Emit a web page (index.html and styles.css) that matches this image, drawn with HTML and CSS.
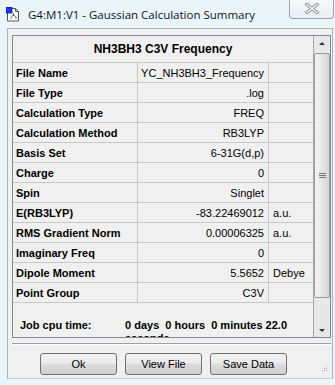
FILE: index.html
```html
<!doctype html>
<html lang="en">
  <head>
    <meta charset="UTF-8" />
    <title>G4:M1:V1 - Gaussian Calculation Summary</title>
    <link rel="stylesheet" href="styles.css">
  </head>
  <body>
    <div class="window">
      <div class="titlebar">
        <svg class="app-icon" width="14" height="15" viewBox="0 0 14 15">
          <path d="M1.5 1.5h8l3 3v9.5h-11z" fill="#fff" stroke="#555" />
          <path d="M9.5 1.5v3h3" fill="none" stroke="#555" />
          <rect x="0" y="0" width="6" height="6" fill="#1a3cf0" stroke="#0a1a80" stroke-width="0.8" />
          <path d="M5 10l2.5-2 2.5 2M7.5 8v-2M5 10v2M10 10v2" stroke="#777" fill="none" />
          <circle cx="7.5" cy="8" r="1" fill="#666" />
        </svg>
        <span class="title">G4:M1:V1 - Gaussian Calculation Summary</span>
        <div class="close-btn">
          <svg width="14" height="11" viewBox="0 0 14 11">
            <path d="M2 1.5l10 8M12 1.5l-10 8" stroke="#8a8f96" stroke-width="3.4" stroke-linecap="square" />
            <path d="M2 1.5l10 8M12 1.5l-10 8" stroke="#f4f6f8" stroke-width="1.6" stroke-linecap="square" />
          </svg>
        </div>
      </div>

      <div class="client">
        <div class="panel">
          <div class="content">
            <div class="head">NH3BH3 C3V Frequency</div>
            <div class="row"><div class="cell label">File Name</div><div class="cell value">YC_NH3BH3_Frequency</div><div class="cell unit"></div></div>
            <div class="row"><div class="cell label">File Type</div><div class="cell value">.log</div><div class="cell unit"></div></div>
            <div class="row"><div class="cell label">Calculation Type</div><div class="cell value">FREQ</div><div class="cell unit"></div></div>
            <div class="row"><div class="cell label">Calculation Method</div><div class="cell value">RB3LYP</div><div class="cell unit"></div></div>
            <div class="row"><div class="cell label">Basis Set</div><div class="cell value">6-31G(d,p)</div><div class="cell unit"></div></div>
            <div class="row"><div class="cell label">Charge</div><div class="cell value">0</div><div class="cell unit"></div></div>
            <div class="row"><div class="cell label">Spin</div><div class="cell value">Singlet</div><div class="cell unit"></div></div>
            <div class="row"><div class="cell label">E(RB3LYP)</div><div class="cell value">-83.22469012</div><div class="cell unit">a.u.</div></div>
            <div class="row"><div class="cell label">RMS Gradient Norm</div><div class="cell value">0.00006325</div><div class="cell unit">a.u.</div></div>
            <div class="row"><div class="cell label">Imaginary Freq</div><div class="cell value">0</div><div class="cell unit"></div></div>
            <div class="row"><div class="cell label">Dipole Moment</div><div class="cell value">5.5652</div><div class="cell unit">Debye</div></div>
            <div class="row"><div class="cell label">Point Group</div><div class="cell value">C3V</div><div class="cell unit"></div></div>
            <div class="cpu">
              <span class="cpu-label">Job cpu time:</span>
              <span class="cpu-value">0 days&nbsp; 0 hours&nbsp; 0 minutes 22.0 seconds</span>
            </div>
          </div>
          <div class="scrollbar">
            <div class="arrow up"></div>
            <div class="thumb"><span class="grip"></span></div>
            <div class="track"></div>
            <div class="arrow down"></div>
          </div>
        </div>

        <div class="separator"></div>

        <div class="buttons">
          <button class="btn">Ok</button>
          <button class="btn">View File</button>
          <button class="btn">Save Data</button>
          <svg class="grip-corner" width="7" height="7" viewBox="0 0 7 7">
            <rect x="5" y="1" width="1" height="1" fill="#a0a0a0" />
            <rect x="3" y="3" width="1" height="1" fill="#a0a0a0" />
            <rect x="5" y="3" width="1" height="1" fill="#a0a0a0" />
            <rect x="1" y="5" width="1" height="1" fill="#a0a0a0" />
            <rect x="3" y="5" width="1" height="1" fill="#a0a0a0" />
            <rect x="5" y="5" width="1" height="1" fill="#a0a0a0" />
          </svg>
        </div>
      </div>
    </div>
  </body>
</html>
```

FILE: styles.css
```css
html,
body {
  margin: 0;
  padding: 0;
}
body {
  width: 335px;
  height: 385px;
  overflow: hidden;
  background: #eaf5f9;
  font-family: "Liberation Sans", Arial, sans-serif;
  font-size: 11px;
  color: #000;
}
.window {
  width: 335px;
  height: 385px;
}
/* title bar */
.titlebar {
  height: 28px;
  display: flex;
  align-items: center;
  position: relative;
}
.app-icon {
  margin-left: 6px;
  margin-top: 1px;
}
.title {
  margin-left: 8px;
  font-family: "Open Sans", "Noto Sans", sans-serif;
  font-size: 11.5px;
  color: #10141c;
  margin-top: 1px;
}
.close-btn {
  position: absolute;
  top: -1px;
  right: 1px;
  width: 43px;
  height: 19px;
  border: 1px solid #9aa5b1;
  border-top: none;
  border-radius: 0 0 4px 4px;
  background: linear-gradient(#f6f9fb, #e9eef2);
  display: flex;
  align-items: center;
  justify-content: center;
}
/* client area */
.client {
  margin: 0 2px 0 7px;
  height: 351px;
  border: 1px solid #a8b3bc;
  border-bottom-color: #c4ccd2;
  background: #f0f0f0;
  box-sizing: border-box;
  padding: 6px 0 0 4px;
}
.panel {
  width: 319px;
  height: 303px;
  box-sizing: border-box;
  border: 1px solid #828790;
  display: flex;
  overflow: hidden;
}
.content {
  width: 300px;
  flex: none;
}
.head {
  height: 27px;
  border-bottom: 1px solid #c8c8c8;
  box-sizing: border-box;
  display: flex;
  align-items: center;
  justify-content: center;
  font-weight: bold;
  font-size: 12px;
}
.row {
  display: grid;
  grid-template-columns: 125px 131px 44px;
  height: 20px;
  border-bottom: 1px solid #c8c8c8;
  box-sizing: border-box;
}
.cell {
  display: flex;
  align-items: center;
  white-space: nowrap;
  overflow: hidden;
}
.label {
  font-weight: bold;
  padding-left: 3px;
  border-right: 1px solid #c8c8c8;
}
.value {
  justify-content: flex-end;
  padding-right: 4px;
  border-right: 1px solid #c8c8c8;
}
.unit {
  padding-left: 4px;
}
.cpu {
  display: flex;
  font-weight: bold;
  padding-top: 16px;
  line-height: 13px;
}
.cpu-label {
  width: 105px;
  padding-left: 7px;
  flex: none;
}
.cpu-value {
  width: 180px;
}
/* vertical scrollbar */
.scrollbar {
  width: 17px;
  flex: none;
  border-left: 1px solid #a8a8a8;
  box-sizing: border-box;
  background: #e8e8e8;
  display: flex;
  flex-direction: column;
}
.arrow {
  height: 17px;
  flex: none;
  position: relative;
}
.arrow::after {
  content: "";
  position: absolute;
  left: 5px;
  border-left: 3px solid transparent;
  border-right: 3px solid transparent;
}
.arrow.up::after {
  top: 6px;
  border-bottom: 3px solid #333;
}
.arrow.down::after {
  top: 9px;
  border-top: 3px solid #333;
}
.thumb {
  height: 245px;
  flex: none;
  margin: 0 0 0 0;
  border: 1px solid #999;
  border-radius: 2px;
  box-sizing: border-box;
  background: linear-gradient(to right, #f4f4f4, #e6e6e6 50%, #d4d4d4);
  display: flex;
  align-items: center;
  justify-content: center;
}
.grip {
  width: 7px;
  height: 5px;
  background: repeating-linear-gradient(#777 0 1px, transparent 1px 2px);
}
.track {
  flex: 1;
}
.separator {
  width: 319px;
  height: 2px;
  margin-top: 5px;
  border-top: 1px solid #a0a0a0;
  border-bottom: 1px solid #fff;
  box-sizing: border-box;
}
.buttons {
  display: flex;
  gap: 8px;
  padding-left: 28px;
  margin-top: 8px;
  position: relative;
}
.btn {
  width: 77px;
  height: 22px;
  padding: 0;
  border: 1px solid #707070;
  border-radius: 3px;
  background: linear-gradient(#f2f2f2 0%, #ebebeb 45%, #dddddd 50%, #cfcfcf 100%);
  font-family: "Liberation Sans", Arial, sans-serif;
  font-size: 11px;
  color: #000;
}
.grip-corner {
  position: absolute;
  right: 4px;
  top: 12px;
}
```
